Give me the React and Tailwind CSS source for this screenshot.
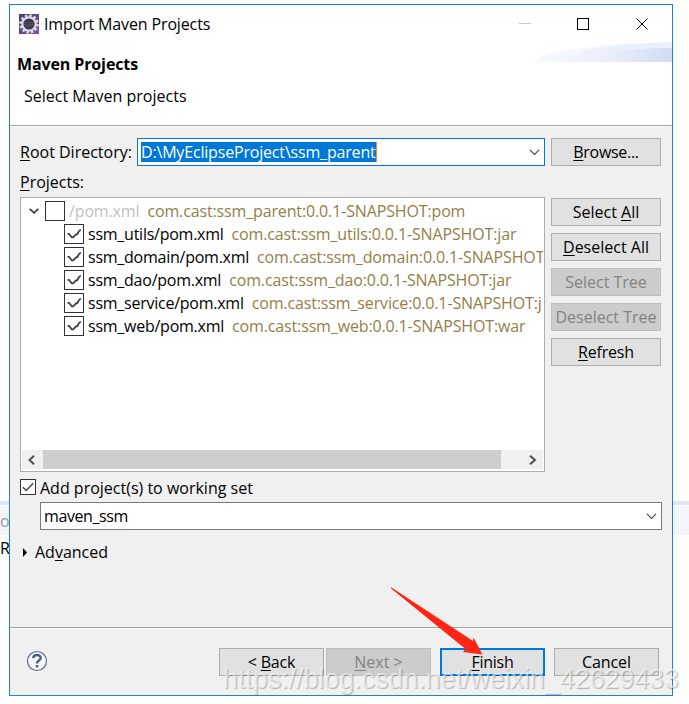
import React, { useState } from 'react';
import clsx from 'clsx';

const projects = [
  { path: 'ssm_utils/pom.xml', artifact: 'com.cast:ssm_utils:0.0.1-SNAPSHOT:jar' },
  { path: 'ssm_domain/pom.xml', artifact: 'com.cast:ssm_domain:0.0.1-SNAPSHOT' },
  { path: 'ssm_dao/pom.xml', artifact: 'com.cast:ssm_dao:0.0.1-SNAPSHOT:jar' },
  { path: 'ssm_service/pom.xml', artifact: 'com.cast:ssm_service:0.0.1-SNAPSHOT:j' },
  { path: 'ssm_web/pom.xml', artifact: 'com.cast:ssm_web:0.0.1-SNAPSHOT:war' },
];

const Key = ({ children }) => (
  <span className="underline decoration-1 underline-offset-2">{children}</span>
);

const Button = ({ children, className, disabled, primary }) => (
  <button
    disabled={disabled}
    className={clsx(
      'flex h-7 shrink-0 items-center justify-center whitespace-pre',
      disabled && 'border border-[#bfbfbf] bg-[#cccccc] text-[#838383]',
      primary && 'border-2 border-[#0078d7] bg-[#e1e1e1]',
      !disabled && !primary && 'border border-[#adadad] bg-[#e1e1e1]',
      className
    )}
  >
    <span>{children}</span>
  </button>
);

const CheckBox = ({ checked, onClick, small }) => (
  <span
    onClick={onClick}
    className={clsx(
      'flex shrink-0 items-center justify-center border border-[#333333] bg-white',
      small ? 'size-4' : 'size-5'
    )}
  >
    {checked && (
      <svg width="14" height="14" viewBox="0 0 14 14" fill="none" stroke="#404040" strokeWidth={small ? 1.4 : 1.8}>
        {small ? <path d="M2 7.2 L5.2 10.5 L12.2 3.2" /> : <path d="M0.5 6.8 L2 6.8 L4.8 10.3 H6.2 L9 7.3 H10.2 L12 4 L13.8 2.6" />}
      </svg>
    )}
  </span>
);

const ComboArrow = () => (
  <svg width="11" height="7" viewBox="0 0 11 7" fill="none" stroke="#444444" strokeWidth="1.1">
    <path d="M0.9 0.9 L5.5 5.5 L10.1 0.9" />
  </svg>
);

const GearIcon = () => (
  <svg width="20" height="20" viewBox="0 0 20 20">
    <defs>
      <linearGradient id="tile" x1="0" y1="0" x2="1" y2="1">
        <stop offset="0" stopColor="#4c3a68" />
        <stop offset="1" stopColor="#7a5ca6" />
      </linearGradient>
    </defs>
    <rect width="20" height="20" fill="url(#tile)" />
    <circle cx="10" cy="10" r="8.5" fill="none" stroke="#dedbe2" strokeWidth="2.4" strokeDasharray="2.5 1.95" />
    <circle cx="10" cy="10" r="6.7" fill="#3b3548" stroke="#dedbe2" strokeWidth="2.2" />
    <path d="M4.9 8.6h10.2M4.7 10.4h10.6M5.4 12.2h9.2" stroke="#5e5870" strokeWidth="0.8" />
  </svg>
);

const TitleBar = () => (
  <div className="flex h-[38px] items-center pl-[9px]">
    <GearIcon />
    <span className="ml-[5px] tracking-[-0.14px]">Import Maven Projects</span>
    <svg className="ml-auto mr-[23px] shrink-0" width="130" height="12" viewBox="0 0 130 12" fill="none">
      <path d="M0 5.5h12" stroke="#c8c8c8" />
      <rect x="58.5" y="0.5" width="11" height="11" stroke="#000000" />
      <path d="M117.5 0.5l11 11M128.5 0.5l-11 11" stroke="#000000" />
    </svg>
  </div>
);

const Swoosh = () => (
  <svg className="absolute right-0 top-[37px]" width="140" height="20" viewBox="0 0 140 20">
    <defs>
      <linearGradient id="swoosh" x1="0" x2="1">
        <stop offset="0" stopColor="#f8fafd" />
        <stop offset="0.6" stopColor="#e8edf9" />
        <stop offset="1" stopColor="#d1dbf4" />
      </linearGradient>
    </defs>
    <path d="M0 20 C15 8 75 1 140 0 V20 Z" fill="#f4f7fd" />
    <path d="M50 9 C80 3 115 1 140 0 V8 C105 8 75 11 50 13 Z" fill="#e2e9f8" opacity="0.6" />
    <path d="M0 20 C40 12 90 6 140 6 V20 Z" fill="url(#swoosh)" />
  </svg>
);

const Tree = () => {
  const [checked, setChecked] = useState(projects.map(() => true));
  const toggle = (index) => setChecked(checked.map((c, i) => (i === index ? !c : c)));

  return (
    <div className="flex h-[275px] w-[525px] flex-col border border-[#abadb3] bg-white p-px">
      <div className="h-[251px] overflow-hidden whitespace-pre tracking-[-0.14px]">
        <div className="flex h-[23px] items-center">
          <svg className="ml-[7px] mr-[6px]" width="10" height="6" viewBox="0 0 10 6" fill="none" stroke="#404040" strokeWidth="1.8">
            <path d="M0.7 0.8 L5 4.8 L9.3 0.8" />
          </svg>
          <CheckBox />
          <span className="ml-1 text-[#bfbfbf]">/pom.xml</span>
          <span className="ml-2 text-[#957d47]">com.cast:ssm_parent:0.0.1-SNAPSHOT:pom</span>
        </div>
        {projects.map((project, index) => (
          <div key={project.path} className="flex h-[23px] items-center pl-[42px]">
            <CheckBox checked={checked[index]} onClick={() => toggle(index)} />
            <span className="ml-1 tracking-[-0.25px]">{project.path}</span>
            <span className="ml-2 text-[#957d47]">{project.artifact}</span>
          </div>
        ))}
      </div>
      <div className="flex h-[19px] items-center bg-[#f0f0f0]">
        <svg className="ml-[6px] mr-[7px] shrink-0" width="8" height="10" viewBox="0 0 8 10" fill="none" stroke="#505050" strokeWidth="2">
          <path d="M6 0.7 L1.5 5 L6 9.3" />
        </svg>
        <div className="h-full w-[458px] bg-[#cdcdcd]" />
        <svg className="ml-auto mr-[6px]" width="8" height="10" viewBox="0 0 8 10" fill="none" stroke="#505050" strokeWidth="2">
          <path d="M1 0.7 L6 5 L1 9.3" />
        </svg>
      </div>
    </div>
  );
};

// the editor window that shows on both sides of the dialog
const Backdrop = () => (
  <div className="absolute inset-0 pt-[501px]">
    <div className="h-1 bg-[#dfe6f7]" />
    <div className="mt-px flex h-[29px] items-center bg-[#f4f5fb] pt-px text-[#999999]">o</div>
    <div className="flex h-[26px] items-center">R</div>
  </div>
);

export default function App() {
  const [workingSet, setWorkingSet] = useState(true);

  return (
    <div className="relative h-[704px] w-[689px] overflow-hidden bg-white pl-[9px] pt-1 font-['Open_Sans','Noto_Sans',sans-serif] text-[16px] leading-5 text-black">
      <Backdrop />

      <div className="relative flex h-[692px] w-[664px] flex-col border border-[#1883d7] bg-[#f0f0f0]">
        <div className="relative h-[121px] shrink-0 border-b border-[#a0a0a0] bg-white">
          <TitleBar />
          <Swoosh />
          <div className="pl-[7px] pt-[11px] font-bold tracking-[-0.12px]">Maven Projects</div>
          <div className="pl-[14px] pt-3">Select Maven projects</div>
        </div>

        <div className="flex flex-1 flex-col border-t border-white pl-[10px] pr-[10px] pt-[11px]">
          <div className="flex h-7 items-center">
            <label className="w-[117px] whitespace-nowrap"><Key>R</Key>oot Directory:</label>
            <div className="flex h-7 w-[408px] items-center justify-between border border-[#0078d7] bg-white pl-[3px] pr-1">
              <span className="-mt-px h-5 border-r border-[#ff8728] bg-[#0078d7] tracking-[-0.18px] text-white">D:\MyEclipseProject\ssm_parent</span>
              <ComboArrow />
            </div>
            <Button className="ml-[6px] w-[110px] tracking-[-0.3px]"><Key>B</Key>rowse...</Button>
          </div>

          <div className="mt-[6px] h-[25px]"><Key>P</Key>rojects:</div>

          <div className="flex gap-[6px]">
            <Tree />
            <div className="flex flex-col gap-[7px] pt-px">
              <Button className="w-[110px]">Select <Key>A</Key>ll</Button>
              <Button className="w-[110px]"><Key>D</Key>eselect All</Button>
              <Button className="w-[110px]" disabled>Select Tree</Button>
              <Button className="w-[110px]" disabled>Deselect Tree</Button>
              <Button className="w-[110px] tracking-[-0.2px]"><Key>R</Key>efresh</Button>
            </div>
          </div>

          <label className="mt-[5px] flex h-5 items-center">
            <CheckBox small checked={workingSet} onClick={() => setWorkingSet(!workingSet)} />
            <span className="ml-1 pt-px">Add project(s) to working set</span>
          </label>

          <div className="ml-5 mt-[5px] flex h-7 items-center justify-between border border-[#7a7a7a] bg-white pl-[3px] pr-1">
            <span className="tracking-[-0.4px]">maven_ssm</span>
            <ComboArrow />
          </div>

          <div className="mt-3 flex items-center">
            <svg className="ml-[3px] mr-2" width="4" height="9" viewBox="0 0 4 9">
              <path d="M0 0 L4 4.5 L0 9 Z" fill="#000000" />
            </svg>
            <span>Ad<Key>v</Key>anced</span>
          </div>
        </div>

        <div className="flex h-[68px] shrink-0 border-t border-[#a0a0a0]">
          <div className="flex flex-1 border-t border-white pl-4 pr-[13px] pt-[19px]">
            <svg className="mt-[2px]" width="22" height="22" viewBox="0 0 22 22" fill="none">
              <circle cx="11" cy="11" r="9.5" fill="#f5f7fa" stroke="#5b6b8d" strokeWidth="1.2" />
              <path d="M7.3 8.2 C7.3 3.9 14.7 3.9 14.7 8 C14.7 10.6 11 10.6 11 13.5" stroke="#4c5d83" strokeWidth="2.4" />
              <rect x="9.7" y="15" width="2.6" height="2.4" fill="#4c5d83" />
            </svg>
            <Button className="ml-auto w-[105px] tracking-[-0.2px]">&lt; <Key>B</Key>ack</Button>
            <Button className="ml-0.5 w-[105px]" disabled><Key>N</Key>ext &gt;</Button>
            <Button className="ml-[9px] w-[105px] tracking-[-0.3px]" primary><Key>F</Key>inish</Button>
            <Button className="ml-[9px] w-[105px] tracking-[-0.1px]">Cancel</Button>
          </div>
        </div>
      </div>

      <svg className="absolute left-[389px] top-[586px]" width="96" height="72" viewBox="0 0 96 72">
        <path d="M1.5 2 L2.5 1.5 L84 55 L84.5 51.5 L93.5 68.5 L74 66 L76.5 63 Z" fill="#ff2414" />
      </svg>

      <div className="absolute left-[223px] top-[663px] whitespace-nowrap font-['Liberation_Sans',sans-serif] text-[26.8px] leading-8 text-white/60 [text-shadow:1px_1px_1px_rgba(0,0,0,0.25)]">
        https://blog.csdn.net/weixin_42629433
      </div>
    </div>
  );
}
